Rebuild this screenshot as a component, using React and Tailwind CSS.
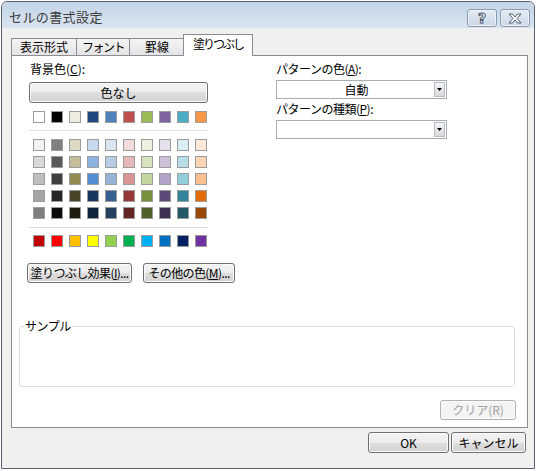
const THEME = [
  ["#FFFFFF", "#000000", "#EEECE1", "#1F497D", "#4F81BD", "#C0504D", "#9BBB59", "#8064A2", "#4BACC6", "#F79646"],
];
const TINTS = [
  ["#F2F2F2", "#7F7F7F", "#DDD9C3", "#C6D9F0", "#DBE5F1", "#F2DCDB", "#EBF1DD", "#E5E0EC", "#DBEEF3", "#FDEADA"],
  ["#D8D8D8", "#595959", "#C4BD97", "#8DB3E2", "#B8CCE4", "#E5B9B7", "#D7E3BC", "#CCC1D9", "#B7DDE8", "#FBD5B5"],
  ["#BFBFBF", "#3F3F3F", "#938953", "#548DD4", "#95B3D7", "#D99694", "#C3D69B", "#B2A2C7", "#92CDDC", "#FAC08F"],
  ["#A5A5A5", "#262626", "#494429", "#17365D", "#366092", "#953734", "#76923C", "#5F497A", "#31859B", "#E36C09"],
  ["#7F7F7F", "#0C0C0C", "#1D1B10", "#0F243E", "#244061", "#632423", "#4F6128", "#3F3151", "#205867", "#974806"],
];
const STANDARD = [
  ["#C00000", "#FF0000", "#FFC000", "#FFFF00", "#92D050", "#00B050", "#00B0F0", "#0070C0", "#002060", "#7030A0"],
];

function SwatchRows({ rows }) {
  return (
    <div className="flex flex-col gap-[5px] pl-[4px]">
      {rows.map((r, i) => (
        <div key={i} className="flex gap-[6px]">
          {r.map((c, j) => (
            <div
              key={j}
              className="w-[12px] h-[12px] border border-[#9c9c9c]"
              style={{ backgroundColor: c }}
            />
          ))}
        </div>
      ))}
    </div>
  );
}

const btn =
  "border border-[#707070] rounded-[3px] bg-[linear-gradient(#f3f3f3,#ececec_50%,#dedede_50%,#d2d2d2)] shadow-[inset_0_0_0_1px_#fbfbfb] flex items-center justify-center shrink-0";

function Select({ value }) {
  return (
    <div className="w-[171px] h-[19px] border border-[#a8aeb6] bg-white flex items-center">
      <span className="flex-1 text-center pl-[2px]">{value}</span>
      <div className="w-[11px] h-[15px] mr-[1px] border border-[#b8bcc2] bg-[linear-gradient(#f4f4f4,#d9d9d9)] flex items-center justify-center">
        <svg width="5" height="3" viewBox="0 0 5 3">
          <path d="M0 0h5L2.5 3z" fill="#000" />
        </svg>
      </div>
    </div>
  );
}

function U({ children }) {
  return <span className="underline underline-offset-1">{children}</span>;
}

export default function App() {
  return (
    <div className="w-[539px] h-[471px] bg-white font-['Noto_Sans_CJK_JP','Noto_Sans',sans-serif] text-[12px] leading-[14px] text-black">
      <div className="ml-[1px] pt-[1px]">
        <div className="w-[534px] h-[468px] border border-[#58636f] rounded-t-[6px] overflow-hidden bg-[#f0f0f0] flex flex-col">
          {/* Title bar */}
          <div className="h-[26px] shrink-0 bg-[linear-gradient(#c3d4e7,#d9e4f0)] flex items-start pl-[7px] pr-[4px]">
            <span className="mt-[8px] text-[13px] leading-[14px] text-[#3c3c3c] tracking-[0.4px]">
              セルの書式設定
            </span>
            <div className="ml-auto mt-[7px] flex gap-[3px]">
              <div className="w-[30px] h-[18px] rounded-[3px] border border-[#8a9bb0] bg-[linear-gradient(#e3ebf4,#cbd8e7)] shadow-[inset_0_0_0_1px_#edf2f8] flex items-center justify-center">
                <span className="font-['DejaVu_Sans',sans-serif] text-[14px] leading-[14px] font-bold text-white [-webkit-text-stroke:1px_#4a5a6c]">
                  ?
                </span>
              </div>
              <div className="w-[30px] h-[18px] rounded-[3px] border border-[#8a9bb0] bg-[linear-gradient(#e3ebf4,#cbd8e7)] shadow-[inset_0_0_0_1px_#edf2f8] flex items-center justify-center">
                <svg width="14" height="11" viewBox="0 0 14 11">
                  <path
                    d="M1 1h3.5L7 4l2.5-3H13L9 5.5 13 10H9.5L7 7l-2.5 3H1l4-4.5z"
                    fill="#fff"
                    stroke="#4a5a6c"
                    strokeWidth="1"
                    strokeLinejoin="round"
                  />
                </svg>
              </div>
            </div>
          </div>

          {/* Client area */}
          <div className="flex-1 flex flex-col pl-[9px] pr-[6px] pt-[7px]">
            {/* Tabs */}
            <div className="h-[21px] flex items-end">
              <div className="w-[66px] h-[18px] border border-[#898c95] bg-[linear-gradient(#f4f4f4,#e4e4e4)] flex items-center justify-center">
                表示形式
              </div>
              <div className="w-[53px] h-[18px] border border-l-0 border-[#898c95] bg-[linear-gradient(#f4f4f4,#e4e4e4)] flex items-center justify-center tracking-[-1.5px]">
                フォント
              </div>
              <div className="w-[55px] h-[18px] border border-l-0 border-[#898c95] bg-[linear-gradient(#f4f4f4,#e4e4e4)] flex items-center justify-center">
                罫線
              </div>
              <div className="relative z-10 -ml-[2px] w-[70px] h-[22px] border border-b-0 border-[#898c95] bg-white flex items-start pt-[2px] justify-center tracking-[-2px]">
                塗りつぶし
              </div>
            </div>

            {/* Panel */}
            <div className="-mt-[1px] h-[373px] border border-[#898c95] bg-white flex flex-col">
              <div className="flex pt-[6px]">
                {/* Left column */}
                <div className="ml-[17px] w-[179px] shrink-0 flex flex-col">
                  <div className="h-[14px] pl-[1px]">
                    背景色(<U>C</U>):
                  </div>
                  <div className={`${btn} mt-[6px] h-[21px]`}>色なし</div>
                  <div className="mt-[8px]">
                    <SwatchRows rows={THEME} />
                  </div>
                  <div className="mt-[7px] h-[1px] bg-[#e2e2e2]" />
                  <div className="mt-[8px]">
                    <SwatchRows rows={TINTS} />
                  </div>
                  <div className="mt-[8px] h-[1px] bg-[#e2e2e2]" />
                  <div className="mt-[7px]">
                    <SwatchRows rows={STANDARD} />
                  </div>
                  <div className="mt-[16px] flex gap-[11px] -ml-[2px]">
                    <div className={`${btn} w-[105px] h-[20px]`}>
                      <span className="whitespace-nowrap tracking-[-0.6px]">
                        塗りつぶし効果(<U>I</U>)...
                      </span>
                    </div>
                    <div className={`${btn} w-[92px] h-[20px]`}>
                      <span className="whitespace-nowrap tracking-[-0.6px]">
                        その他の色(<U>M</U>)...
                      </span>
                    </div>
                  </div>
                </div>

                {/* Right column */}
                <div className="ml-[68px] flex flex-col">
                  <div className="h-[14px] tracking-[-0.5px] whitespace-nowrap">
                    パターンの色(<U>A</U>):
                  </div>
                  <div className="mt-[4px]">
                    <Select value="自動" />
                  </div>
                  <div className="mt-[3px] h-[14px] tracking-[-0.5px] whitespace-nowrap">
                    パターンの種類(<U>P</U>):
                  </div>
                  <div className="mt-[4px]">
                    <Select value="" />
                  </div>
                </div>
              </div>

              {/* Sample group */}
              <div className="relative mt-[43px] ml-[7px] w-[496px] h-[61px] border border-[#d5dfe5] rounded-[3px]">
                <span className="absolute left-[4px] -top-[8px] bg-white px-[1px] tracking-[-0.5px]">
                  サンプル
                </span>
              </div>

              <div className="mt-[13px] ml-[428px] w-[76px]">
                <div className={`${btn} h-[20px] border-[#adb2b5] text-[#a0a0a0] bg-[linear-gradient(#f4f4f4,#f4f4f4)]`}>
                  <span className="whitespace-nowrap">クリア(R)</span>
                </div>
              </div>
            </div>

            {/* Bottom buttons */}
            <div className="mt-[4px] flex justify-end gap-[2px] pr-[2px]">
              <div className={`${btn} w-[81px] h-[21px] border-[#3c7fb1] shadow-[inset_0_0_0_1px_#bfe4f9]`}>
                OK
              </div>
              <div className={`${btn} w-[75px] h-[21px]`}>
                <span className="whitespace-nowrap">キャンセル</span>
              </div>
            </div>
          </div>
        </div>
      </div>
    </div>
  );
}
